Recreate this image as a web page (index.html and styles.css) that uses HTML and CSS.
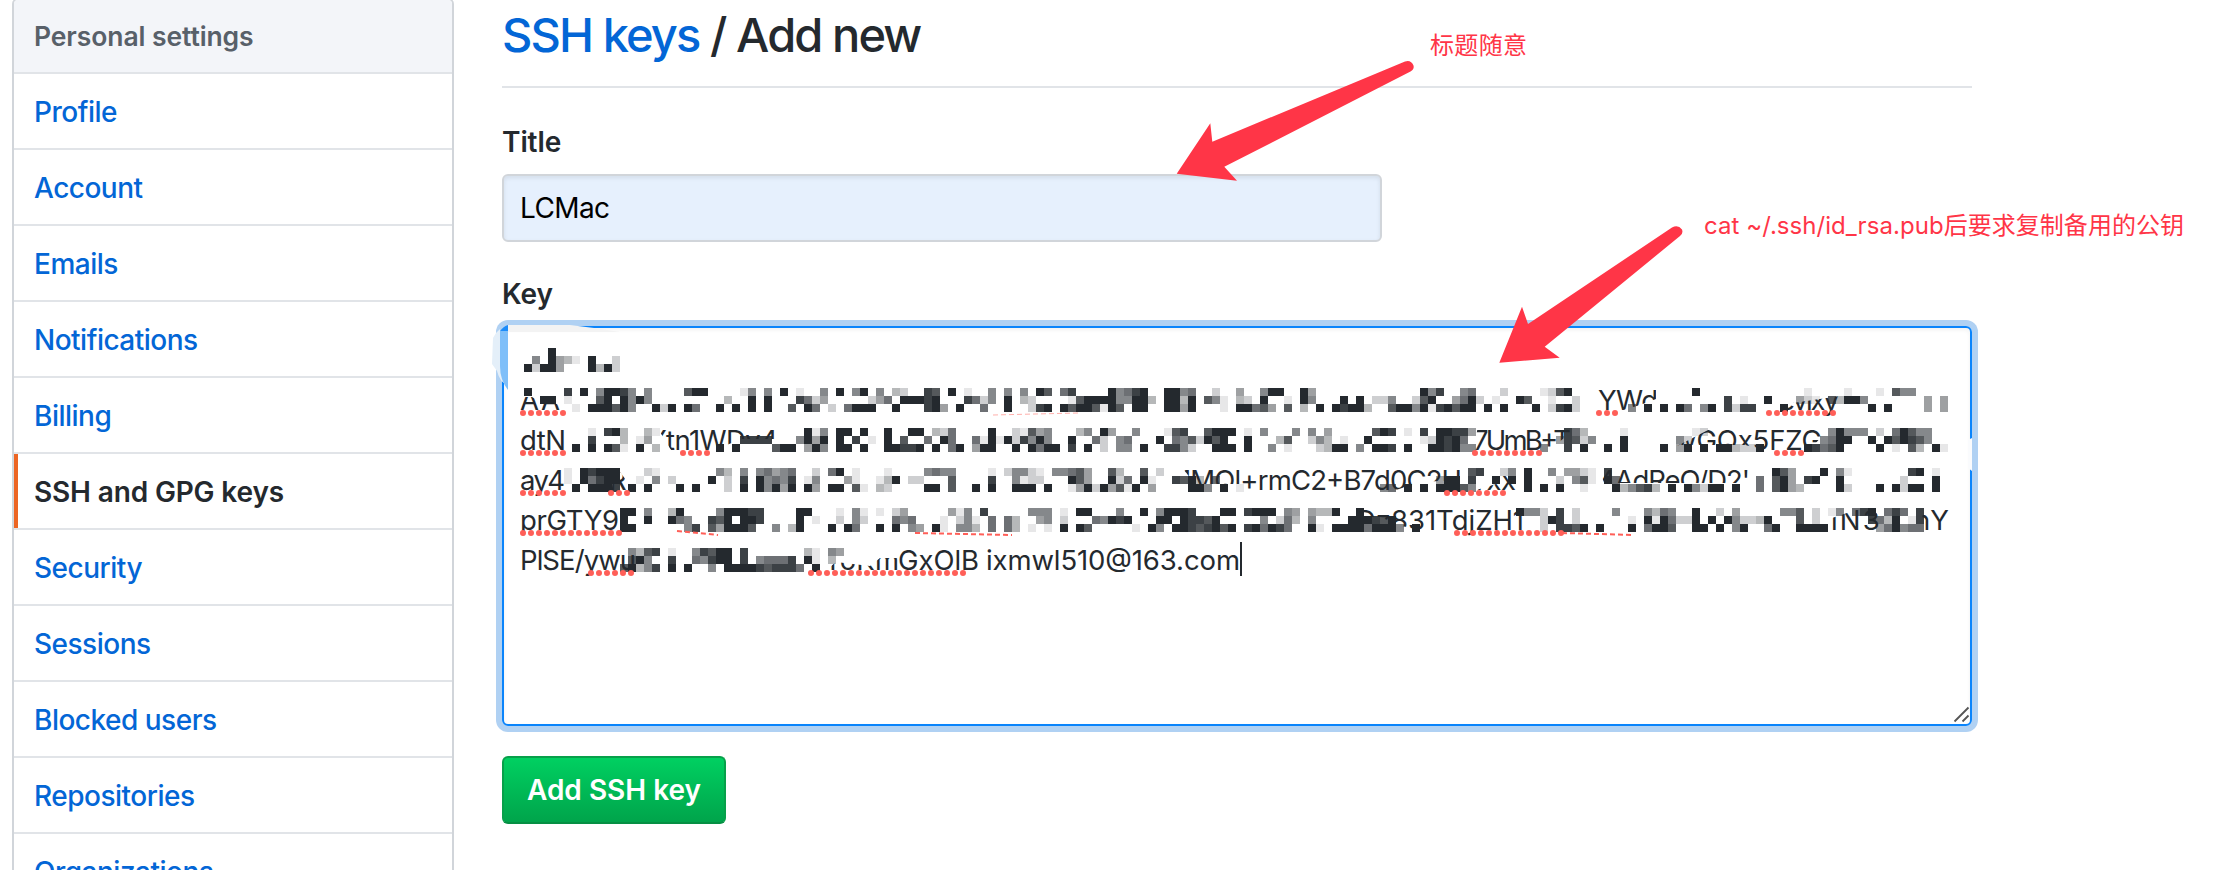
FILE: index.html
```
<!DOCTYPE html>
<html lang="en">
<head>
<meta charset="utf-8">
<title>SSH keys / Add new</title>
<link rel="stylesheet" href="styles.css">
</head>
<body>
<div class="page">
  <nav class="menu">
    <h3 class="menu-heading"><span>Personal settings</span></h3>
    <a class="menu-item"><span>Profile</span></a>
    <a class="menu-item"><span>Account</span></a>
    <a class="menu-item"><span>Emails</span></a>
    <a class="menu-item"><span>Notifications</span></a>
    <a class="menu-item"><span>Billing</span></a>
    <a class="menu-item selected"><span>SSH and GPG keys</span></a>
    <a class="menu-item"><span>Security</span></a>
    <a class="menu-item"><span>Sessions</span></a>
    <a class="menu-item"><span>Blocked users</span></a>
    <a class="menu-item"><span>Repositories</span></a>
    <a class="menu-item"><span>Organizations</span></a>
  </nav>
  <main class="content">
    <h2 class="subhead"><a class="link">SSH keys</a> / Add new</h2>
    <div class="label">Title</div>
    <div class="field">LCMac</div>
    <div class="label key-label">Key</div>
    <div class="textarea">
      <svg class="key" viewBox="490 320 1490 412" width="1490" height="412">
        <defs>
          <clipPath id="c-aa"><path d="M518 397H532L541 402H552L566 408V420H518Z"/></clipPath>
          <clipPath id="c-yw"><path d="M1590 385H1656V399L1640 405L1620 411H1590Z"/></clipPath>
          <clipPath id="c-vi"><path d="M1776 410L1786 404L1840 396V420H1776Z"/></clipPath>
          <clipPath id="c-tn"><path d="M658 425H778V439H742L724 446L712 455H674L660 432Z"/></clipPath>
          <clipPath id="c-um"><path d="M1478 425H1580L1558 443L1542 456H1473Z"/></clipPath>
          <clipPath id="c-gq"><path d="M1677 446L1712 428H1822V436L1808 452L1775 452L1745 445H1677Z"/></clipPath>
          <clipPath id="c-r"><path d="M617 468L632 488V492H611Z"/></clipPath>
          <clipPath id="c-mq"><path d="M1180 465H1460V480L1420 482L1390 492H1240V484L1195 484Z"/></clipPath>
          <clipPath id="c-xx"><path d="M1460 495L1496 484V476H1516V495Z"/></clipPath>
          <clipPath id="c-ad"><path d="M1600 470H1750V483H1604Z"/></clipPath>
          <clipPath id="c-tz"><path d="M1356 505H1528V532L1500 540H1460L1402 526L1380 517H1356Z"/></clipPath>
          <clipPath id="c-n3"><path d="M1832 518L1856 510H1874L1882 520V537H1832ZM1924 505H1952V535H1920Z"/></clipPath>
          <clipPath id="c-ok"><path d="M824 572L836 562L870 566L880 558H898V575H824Z"/></clipPath>
        </defs>
        <g class="smear">
          <path d="M493 338Q496 332 500 329L508 385Q500 383 497 371L492 364Z" fill="#e4eff9"/>
          <path d="M500 331H508V390Q500 380 500 366Z" fill="#7fbff9"/>
          <path d="M500 331Q504 326 508 325V331Z" fill="#1c8cfa"/>
          <path d="M508 325H570L594 328L620 332H508Z" fill="#f3f3f3"/>
          <path d="M1968 440L1972 438V471L1968 468Z" fill="#fafbfd"/>
        </g>
        <g id="mosaic" shape-rendering="crispEdges"></g>
        <g class="key-text">
          <text x="520" y="410" textLength="40" clip-path="url(#c-aa)">AA</text>
          <text x="1598" y="410" textLength="60" clip-path="url(#c-yw)">YWd</text>
          <text x="1779" y="410" textLength="60" clip-path="url(#c-vi)">evixy</text>
          <text x="520" y="450" textLength="46">dtN</text>
          <text x="648" y="450" textLength="130" clip-path="url(#c-tn)">Ytn1WDv4</text>
          <text x="1473" y="450" textLength="98" clip-path="url(#c-um)">7UmB+T</text>
          <text x="1674" y="450" textLength="148" clip-path="url(#c-gq)">wGQx5FZG</text>
          <text x="520" y="490" textLength="45">ay4</text>
          <text x="609" y="490" textLength="26" clip-path="url(#c-r)">R\</text>
          <text x="1180" y="490" textLength="282" clip-path="url(#c-mq)">1MQl+rmC2+B7d0C2H</text>
          <text x="1476" y="490" textLength="40" clip-path="url(#c-xx)">rxx</text>
          <text x="1598" y="490" textLength="152" clip-path="url(#c-ad)">4AdReQ/D2'</text>
          <text x="520" y="530" textLength="99">prGTY9</text>
          <text x="1356" y="530" textLength="168" clip-path="url(#c-tz)">Dz831TdjZH1</text>
          <text x="1831" y="530" textLength="118" clip-path="url(#c-n3)">lN3,UnY</text>
          <text x="520" y="570" textLength="116">PlSE/ywu</text>
          <text x="824" y="570" textLength="75" clip-path="url(#c-ok)">ToKm</text>
          <text x="898" y="570" textLength="81">GxOlB</text>
          <text x="986" y="570" textLength="254">ixmwl510@163.com</text>
        </g>
        <path class="spell" d="M523 413H564M1599 413H1616M1769 413H1834M523 453H564M683 453H708M1475 453H1540M1777 453H1802M523 493H564M611 493H628M1447 493H1508M523 533H620M1457 533H1562M591 573H636M811 573H970"/>
        <path class="spell-thin" d="M677 531L718 535M915 533L1012 535M1562 533L1634 535"/>
        <path class="spell-thin faint" d="M993 415L1078 413"/>
        <path d="M1241 542V576" stroke="#24292e" stroke-width="2"/>
        <path d="M1954.500 721.500L1968.500 707.500M1962.500 721.500L1968.500 715.500" stroke="#555" stroke-width="1.800"/>
      </svg>
    </div>
    <button class="button"><span>Add SSH key</span></button>
  </main>
  <svg class="notes" viewBox="0 0 2224 870" width="2224" height="870">
    <path d="M1176.700 173.700L1210.300 123.300L1212.300 141.700L1405 61.500Q1411 59.500 1413.500 65.500Q1414.500 69.500 1410.500 71.500L1224.300 166.800L1237 180.800Z"/>
    <path d="M1499.300 362.700L1522 306.700L1528 324L1672 227.500Q1678 224 1682 229.500Q1683.500 233.500 1680 236L1544.700 346.700L1559.700 357.700Z"/>
    <text x="1430" y="54" textLength="97">标题随意</text>
    <text x="1704" y="234" textLength="480">cat ~/.ssh/id_rsa.pub后要求复制备用的公钥</text>
  </svg>
</div>
<script src="mosaic.js"></script>
</body>
</html>
```
FILE: styles.css
```
* { box-sizing: border-box; }
body {
  margin: 0;
  background: #fff;
  color: #24292e;
  font-family: Inter, "Noto Sans CJK SC", sans-serif;
  font-size: 28px;
}
.page {
  position: relative;
  display: flex;
  align-items: flex-start;
  width: 2224px;
  height: 870px;
  overflow: hidden;
}
.menu {
  width: 442px;
  margin: -2px 48px 0 12px;
  border: 2px solid #d1d5da;
  border-radius: 6px;
  flex: none;
  overflow: hidden;
}
.menu-heading {
  margin: 0;
  height: 74px;
  padding: 0 20px;
  line-height: 73px;
  font-size: 26.5px;
  font-weight: 600;
  letter-spacing: -0.1px;
  color: #586069;
  background: #f3f5f9;
  border-bottom: 2px solid #e1e4e8;
}
.menu-item {
  display: block;
  height: 76px;
  padding: 0 20px;
  line-height: 76px;
  font-weight: 450;
  letter-spacing: -0.5px;
  color: #0366d6;
  border-bottom: 2px solid #e1e4e8;
}
.menu-item.selected {
  color: #24292e;
  font-weight: 600;
  letter-spacing: -0.15px;
  box-shadow: inset 4px 0 0 #ec6523;
}
.content { width: 1470px; flex: none; }
.subhead {
  margin: 0;
  height: 88px;
  border-bottom: 2px solid #e1e4e8;
  font-size: 47px;
  line-height: 70px;
  font-weight: 450;
  letter-spacing: -1.9px;
}
.link { color: #0366d6; }
.label {
  margin-top: 33px;
  height: 53px;
  line-height: 42px;
  font-weight: 600;
  letter-spacing: -0.1px;
}
.field {
  width: 880px;
  height: 68px;
  padding: 0 16px;
  line-height: 64px;
  letter-spacing: -0.6px;
  color: #000;
  background: #e6f0fd;
  border: 2px solid #d1d5da;
  border-radius: 6px;
  box-shadow: inset 0 2px 4px rgba(27, 31, 35, .09);
}
.key-label { margin-top: 31px; }
.textarea {
  position: relative;
  height: 400px;
  border: 2px solid #0a84fb;
  border-radius: 6px;
  box-shadow: inset 0 2px 4px rgba(27, 31, 35, .06), 0 0 0 6px #b0d1f3;
}
.key {
  position: absolute;
  left: -14px;
  top: -8px;
}
.key-text {
  font-size: 27.500px;
  fill: #24292e;
}
.spell, .spell-thin {
  fill: none;
  stroke: #ff5f58;
  stroke-width: 6;
  stroke-linecap: round;
  stroke-dasharray: 0 8;
}
.spell-thin {
  stroke-width: 2;
  stroke-linecap: butt;
  stroke-dasharray: 5 3;
}
.faint {
  stroke-width: 1;
  opacity: .5;
}
.button {
  display: block;
  width: 224px;
  height: 68px;
  margin-top: 30px;
  padding: 0;
  border: 2px solid #07a04a;
  border-bottom-color: #068f43;
  border-radius: 6px;
  background: linear-gradient(#00d061, #00a44b);
  color: #fff;
  font: 600 28px Inter, sans-serif;
  letter-spacing: 0;
}
.notes {
  position: absolute;
  left: 0;
  top: 0;
  fill: #ff3547;
  font-size: 24px;
}
```
FILE: mosaic.js
```
// Pixelated cells: each row is [y, "column:levels ..."], level 1 (light) to 9 (dark).
const rows = [
  [348, "3:9"],
  [356, "1:5 3:9431 8:9 11:2"],
  [364, "0:92994 8:9392"],
  [388, "0:9 5:8 7:9 9:59985 15:5 20:799 27:15 30:5 32:9 34:1 37:5 39:9 41:59 44:5 46:32 50:87 53:9 55:1 58:5 60:5 62:5 64:97 67:68 73:95689 80:9956 86:2 89:4 92:599 97:94 112:958 117:56 122:2 127:1279 146:9 160:1 165:1 169:1 171:755"],
  [396, "2:99 5:1 9:79 12:9595 25:3 28:9 30:9 34:8624 43:246 47:99989 55:8625 60:9 62:32 68:17999955993 80:9939 85:751 89:32 92:9 95:1 97:95 102:9 104:9 106:225 111:279 116:4692 121:1 124:97 128:1 131:2 150:8 152:1 155:9 159:421 163:73995 175:4 177:4"],
  [404, "6:1 8:999795 16:929 20:96 24:9 26:9 28:9 30:9 33:7 35:96 38:2 40:6999 46:9 50:894 54:9 57:6 60:9 63:289 67:979971 73:97 76:99 80:9949 87:1 89:99674 95:7 97:3 99:9 101:98993 108:79959189799 120:9 122:9 126:9 128:2892 138:5 140:9 142:9 144:96 147:59 150:8288 157:9 168:9 170:9 175:4 177:4"],
  [428, "8:1 10:893 15:31 35:915 39:99 42:9 45:9 48:99 51:326 58:9 61:21745 69:35 72:94 76:5 80:178 85:7999 90:1 92:5 96:5 98:5 100:4 106:798 110:1 112:8 114:99884 130:863 137:1 146:12 163:59555 169:2 171:69755"],
  [436, "8:8 12:3 14:14 27:8888 34:5949 39:9 41:8 43:1 45:9 47:7 50:6 52:96 56:61919 60:928595 68:9 71:62 74:56 79:9 81:657297 87:9 90:9 94:37 98:253 102:1 105:9 112:12989 117:6 129:48725 137:9 144:52 162:5699 168:9 170:979875"],
  [444, "6:9 8:9 10:971 14:9 16:3 24:9 26:9 31:799 35:495 39:99 42:9 45:99889 51:9 53:69 56:499 61:9 63:9699 68:8 70:9 72:2 74:55 77:9 80:8852 86:999 90:9 93:5 95:1 99:2399 104:5 106:998 110:9 113:998955 127:5 130:8 132:9 135:9 137:9 142:9 144:49 147:9 149:993229 160:98679 169:9 171:1 173:73 176:91"],
  [468, "5:1 7:98999 15:21 24:53 27:5 29:56456 36:2 38:69 41:1 45:1 50:5655 58:1 60:25521 66:55674 73:73 77:7 79:2 118:78 122:25 125:9 128:5 130:4421 135:8 156:974 162:9 164:51 173:89 176:1"],
  [476, "5:1 7:96899 14:1 16:5 18:2 23:9 25:2 27:8 29:95658 35:15 40:41 44:139 48:22 53:7 58:8 61:5122 68:974 73:926 77:91 81:8793 86:6 114:499 118:8 121:9 123:9 125:9 129:2 131:571 135:96 154:6 156:794 160:89 164:9 172:2 176:9"],
  [484, "6:9 8:9998 13:9 15:9 19:9 21:9 25:2 27:9 29:95949 35:94 38:99 41:71 44:32 50:99 53:7 56:9 58:9 61:999 65:9 68:149294719 78:4 83:995 87:9 89:1 107:56 110:9 112:9 114:99975 125:9 127:9 129:9 132:1 136:935783 143:9 145:95299 151:9 154:6 156:7943 164:92 169:9 171:9299 176:9"],
  [508, "12:99 15:5 18:39 24:599988 34:99 39:1 41:51 44:1 46:24 53:415 57:8 63:555 67:1 69:99 74:5 77:9 79:59998 87:99 90:8999 95:54 98:4339 104:9 124:9552 129:8 131:2 136:5 140:5365 146:9 149:2 151:4 157:557 161:2 163:15 166:689 170:686 174:8"],
  [516, "12:9 15:9 18:965 23:879 27:998 34:9 36:1 39:2 41:52 46:656 52:1 54:251 58:6 60:63 64:45 67:2 71:65989 79:99 82:98879 92:5 94:263 98:5 103:999879 127:298 131:2 138:1 140:9196229 148:9 150:952239 159:7 161:2 168:8639 173:18"],
  [524, "12:99 20:58 23:749997 31:5 33:39 38:9 40:96 44:9 46:9 48:54 51:91 54:553 58:6 60:63 63:1 65:1 67:9 69:97 76:1 78:95 81:99878979 90:89699 94:86 98:91 101:999969995 111:9 127:2 129:8879 134:9 138:9 140:6997 146:99 149:9 151:59 155:69 159:9999 169:469566"],
  [548, "13:5378 18:1 21:58799 27:8 35:31 38:54"],
  [556, "13:795 18:8 21:65899 27:8 29:56668 35:91 38:3"],
  [564, "12:7935 16:8 18:9 20:9 23:5 25:9999878886 36:9"]
];
const ns = "http://www.w3.org/2000/svg";
const group = document.getElementById("mosaic");
const mix = (to, n) => Math.round(255 + (to - 255) * n / 9);
for (const [y, runs] of rows) {
  for (const run of runs.split(" ")) {
    const [start, levels] = run.split(":");
    [...levels].forEach((n, i) => {
      const r = document.createElementNS(ns, "rect");
      r.setAttribute("x", 524 + 8 * (Number(start) + i));
      r.setAttribute("y", y);
      r.setAttribute("width", 8);
      r.setAttribute("height", 8);
      r.setAttribute("fill", `rgb(${mix(36, n)},${mix(41, n)},${mix(46, n)})`);
      group.appendChild(r);
    });
  }
}
```
